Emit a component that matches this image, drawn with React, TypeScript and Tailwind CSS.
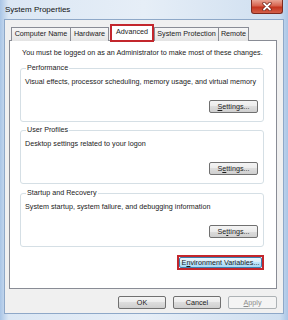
import type { ReactNode } from "react";

const font = "font-['Liberation_Sans',Arial,sans-serif]";

function WinButton({
  children,
  width,
  disabled = false,
}: {
  children: ReactNode;
  width: string;
  disabled?: boolean;
}) {
  return (
    <div
      className={`${width} h-[13px] flex items-center justify-center rounded-[2px] border text-[7.2px] leading-[10px] ${
        disabled
          ? "border-[#adb2b5] bg-[#f4f4f4] text-[#8d8d8d]"
          : "border-[#707070] bg-[linear-gradient(#f4f4f4,#ebebeb_50%,#dddddd_50%,#cfcfcf)] text-[#1b1b1b]"
      }`}
    >
      {children}
    </div>
  );
}

function Group({
  label,
  desc,
  settings,
  className = "",
}: {
  label: string;
  desc: string;
  settings: ReactNode;
  className?: string;
}) {
  return (
    <div
      className={`relative rounded-[3px] border border-[#d5dfe5] pl-[4px] pr-[5px] pt-[8px] pb-[8px] ${className}`}
    >
      <span className="absolute left-[5px] top-[-6px] bg-white px-[1px] text-[7.2px] leading-[10px]">
        {label}
      </span>
      <div className="h-[10px] text-[7.2px] leading-[10px] whitespace-nowrap">
        {desc}
      </div>
      <div className="mt-[13px] flex justify-end">
        <WinButton width="w-[49px]">{settings}</WinButton>
      </div>
    </div>
  );
}

const tabs = [
  { name: "Computer Name", w: "w-[60px]", cls: "" },
  { name: "Hardware", w: "w-[39px]", cls: "-ml-px" },
];

export default function App() {
  return (
    <div
      className={`${font} w-[288px] h-[320px] overflow-hidden bg-[linear-gradient(90deg,#a9c5e6,#dbe7f4_3%,#e6eef7_50%,#cfdff0_97%,#a9c5e6)] text-[#1b1b1b]`}
    >
      {/* title bar */}
      <div className="relative h-[20px] flex items-center pl-[5px]">
        <span className="text-[8px] leading-[10px] text-[#111]">
          System Properties
        </span>
        <div className="absolute right-[5px] top-0 w-[32px] h-[14px] rounded-b-[3px] border border-t-0 border-[#7e2a1f] bg-[linear-gradient(#e9a493,#d7634e_45%,#c4341d_55%,#d3604a)] flex items-center justify-center">
          <svg width="10" height="9" viewBox="0 0 10 9">
            <path
              d="M2 1.5 L8 7.5 M8 1.5 L2 7.5"
              stroke="#6b1f14"
              strokeWidth="3.2"
              strokeLinecap="round"
            />
            <path
              d="M2 1.5 L8 7.5 M8 1.5 L2 7.5"
              stroke="#ffffff"
              strokeWidth="1.8"
              strokeLinecap="round"
            />
          </svg>
        </div>
      </div>

      {/* client area */}
      <div className="mx-[5px] h-[293px] bg-[#f0f0f0] pt-[5px] pl-[4px] pr-[6px] shadow-[0_0_0_1px_#8ea8c8]">
        {/* tabs */}
        <div className="flex items-end h-[16px] pl-[2px]">
          {tabs.map((t) => (
            <div
              key={t.name}
              className={`${t.w} ${t.cls} h-[14px] border border-b-0 border-[#898c95] bg-[linear-gradient(#f6f6f6,#e4e4e4)] text-[7.2px] leading-[12px] text-center whitespace-nowrap`}
            >
              {t.name}
            </div>
          ))}
          <div className="relative z-10 ml-[2px] w-[42px] h-[16px] border border-b-0 border-[#898c95] bg-white text-[7.2px] leading-[12px] text-center outline-2 outline-offset-[-1px] outline-[#c3262c]">
            Advanced
          </div>
          <div className="ml-[1px] w-[65px] h-[14px] border border-b-0 border-[#898c95] bg-[linear-gradient(#f6f6f6,#e4e4e4)] text-[7.2px] leading-[12px] text-center whitespace-nowrap">
            System Protection
          </div>
          <div className="-ml-px w-[31px] h-[14px] border border-b-0 border-[#898c95] bg-[linear-gradient(#f6f6f6,#e4e4e4)] text-[7.2px] leading-[12px] text-center">
            Remote
          </div>
        </div>

        {/* tab panel */}
        <div className="-mt-px h-[249px] border border-[#898c95] bg-white pl-[10px] pr-[12px]">
          <div className="mt-[7px] h-[10px] pl-[2px] text-[7.2px] leading-[10px] whitespace-nowrap">
            You must be logged on as an Administrator to make most of these
            changes.
          </div>

          <Group
            className="mt-[10px]"
            label="Performance"
            desc="Visual effects, processor scheduling, memory usage, and virtual memory"
            settings={
              <span>
                <u>S</u>ettings...
              </span>
            }
          />
          <Group
            className="mt-[8px]"
            label="User Profiles"
            desc="Desktop settings related to your logon"
            settings={
              <span>
                S<u>e</u>ttings...
              </span>
            }
          />
          <Group
            className="mt-[9px]"
            label="Startup and Recovery"
            desc="System startup, system failure, and debugging information"
            settings={
              <span>
                Se<u>t</u>tings...
              </span>
            }
          />

          <div className="mt-[8px] flex justify-end">
            <div className="w-[87px] h-[15px] border-2 border-[#c3262c] flex">
              <div className="flex-1 flex items-center justify-center border border-[#3c7fb1] rounded-[2px] bg-[linear-gradient(#eaf6fd,#d9f0fc_50%,#bee6fd_50%,#a7d9f5)] text-[7.2px] leading-[10px] whitespace-nowrap">
                E<u>n</u>vironment Variables...
              </div>
            </div>
          </div>
        </div>

        {/* dialog buttons */}
        <div className="mt-[7px] flex justify-end gap-[7px]">
          <WinButton width="w-[48px]">OK</WinButton>
          <WinButton width="w-[48px]">Cancel</WinButton>
          <WinButton width="w-[49px]" disabled>
            <span>
              <u>A</u>pply
            </span>
          </WinButton>
        </div>
      </div>
    </div>
  );
}
